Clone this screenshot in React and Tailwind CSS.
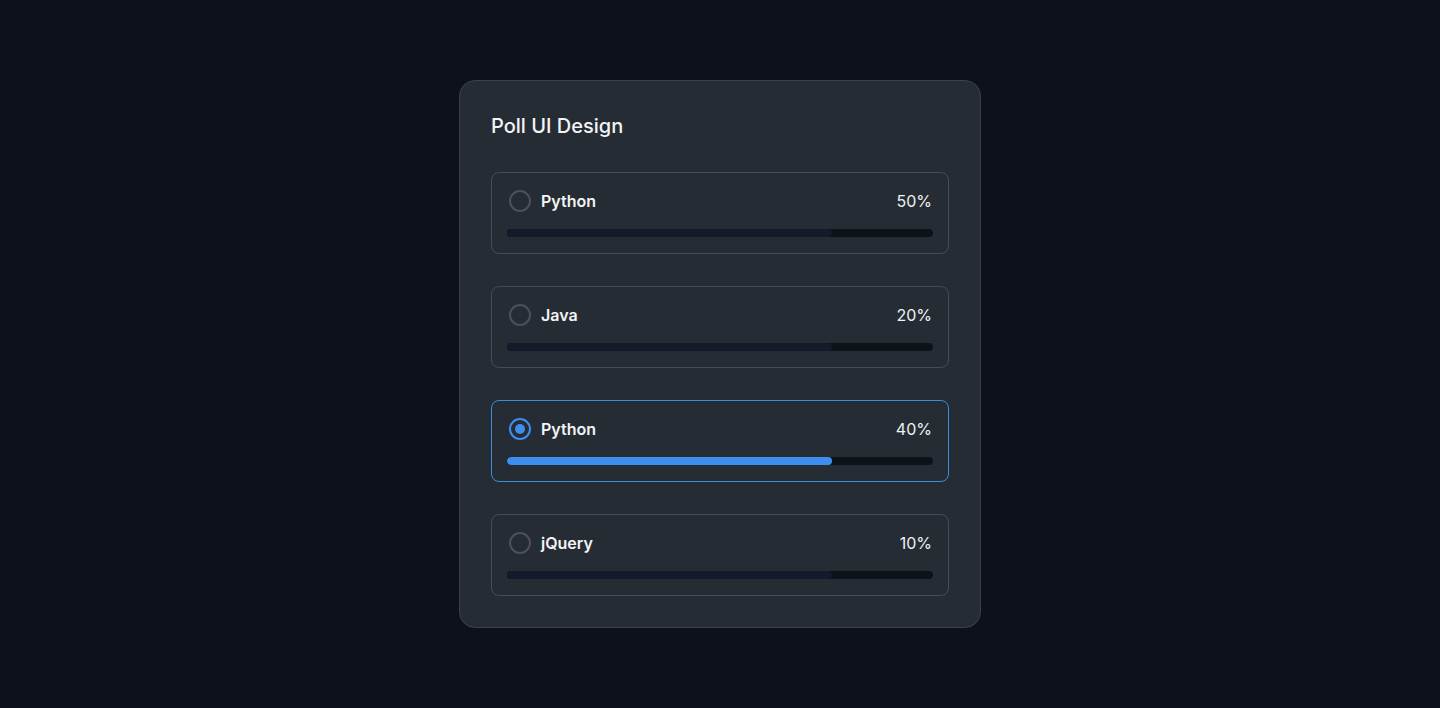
import React, { useState } from 'react';

const options = [
  { id: 1, label: 'Python', percent: 50 },
  { id: 2, label: 'Java', percent: 20 },
  { id: 3, label: 'Python', percent: 40 },
  { id: 4, label: 'jQuery', percent: 10 },
];

const PollOption = ({ option, selected, onSelect }) => (
  <button
    type="button"
    onClick={() => onSelect(option.id)}
    className={`w-full text-left rounded-lg border px-[15px] py-4 bg-[#262c33] ${
      selected ? 'border-[#3f8be0]' : 'border-[#454c55]'
    }`}
  >
    <div className="flex items-center justify-between h-6 pr-[1px]">
      <div className="flex items-center gap-[10px] pl-[2px]">
        {selected ? (
          <span className="w-[22px] h-[22px] rounded-full border-2 border-[#3d8ef0] flex items-center justify-center">
            <span className="w-[10px] h-[10px] rounded-full bg-[#3d8ef0]" />
          </span>
        ) : (
          <span className="w-[22px] h-[22px] rounded-full border-2 border-[#4a5159]" />
        )}
        <span className="text-base font-semibold text-[#f3f4f6]">{option.label}</span>
      </div>
      <span className="text-base text-[#f0f2f5]">{option.percent}%</span>
    </div>
    <div className="mt-4 h-2 rounded-full bg-[#0e131a] overflow-hidden">
      <div
        className={`h-full rounded-full ${selected ? 'bg-[#3d8ef0]' : 'bg-[#141a2c]'}`}
        style={{ width: '76.3%' }}
      />
    </div>
  </button>
);

const App = () => {
  const [selectedId, setSelectedId] = useState(3);

  return (
    <div
      className="min-h-screen bg-[#0d121a] flex justify-center pt-20"
      style={{ fontFamily: 'Inter, "Noto Sans", sans-serif' }}
    >
      <div className="w-[522px] h-fit rounded-2xl border border-[#3a414a] bg-[#262c33] p-[31px]">
        <h1 className="text-xl font-medium text-[#f3f4f6] leading-7 mb-8">Poll UI Design</h1>
        <div className="flex flex-col gap-8">
          {options.map((option) => (
            <PollOption
              key={option.id}
              option={option}
              selected={option.id === selectedId}
              onSelect={setSelectedId}
            />
          ))}
        </div>
      </div>
    </div>
  );
};

export default App;
